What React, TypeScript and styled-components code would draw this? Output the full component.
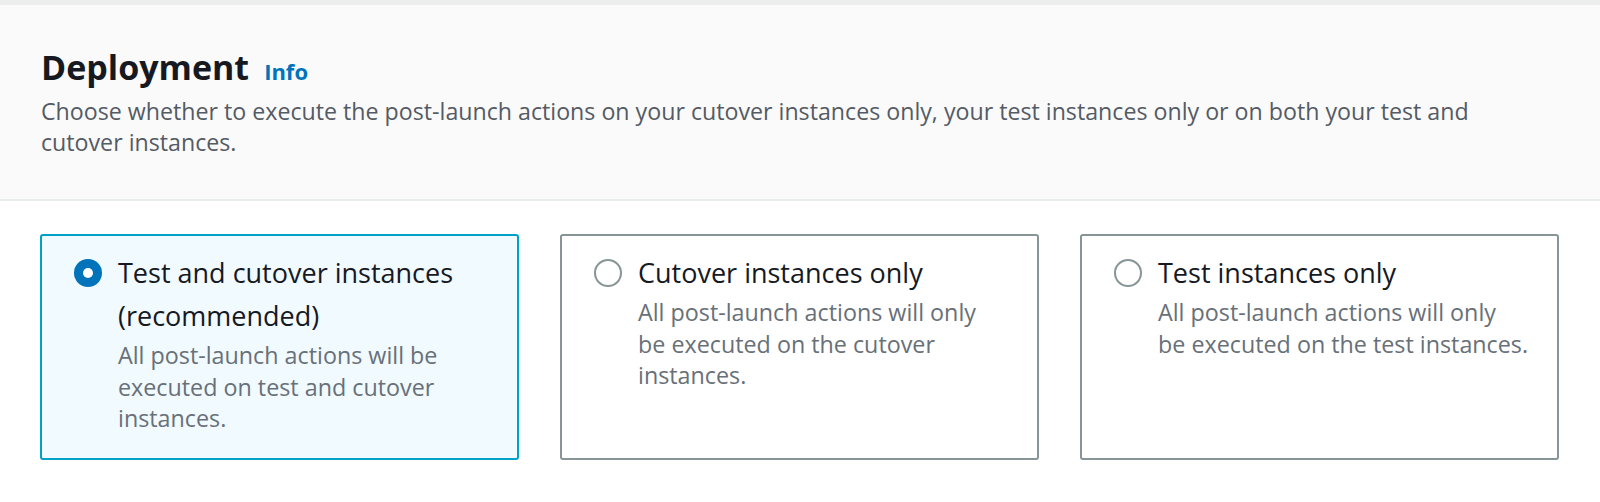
import React, { useState } from 'react';
import styled, { createGlobalStyle } from 'styled-components';

const GlobalStyle = createGlobalStyle`
  html, body {
    margin: 0;
    padding: 0;
    background: #ffffff;
  }
  body {
    font-family: "Open Sans", "Noto Sans", Arial, sans-serif;
    -webkit-font-smoothing: antialiased;
  }
`;

const Panel = styled.section`
  width: 1600px;
  height: 502px;
  box-sizing: border-box;
  border-top: 5px solid #eceeee;
  background: #ffffff;
`;

const Header = styled.header`
  background: #fafafa;
  border-bottom: 2px solid #eaeded;
  padding: 40px 41px 41px 41px;
`;

const TitleRow = styled.div`
  display: flex;
  align-items: baseline;
  gap: 15px;
`;

const Title = styled.h2`
  margin: 0;
  font-size: 34px;
  line-height: 44px;
  font-weight: 700;
  color: #16191f;
`;

const InfoLink = styled.a`
  font-size: 22px;
  font-weight: 700;
  color: #0073bb;
  text-decoration: none;
  cursor: pointer;
`;

const Description = styled.p`
  margin: 7px 0 0 0;
  max-width: 1480px;
  font-size: 23.2px;
  line-height: 31px;
  color: #545b64;
`;

const Tiles = styled.div`
  display: grid;
  grid-template-columns: repeat(3, 1fr);
  gap: 41px;
  padding: 33px 41px 0 40px;
`;

const Tile = styled.label<{ $selected: boolean }>`
  display: flex;
  align-items: flex-start;
  gap: 16px;
  height: 226px;
  box-sizing: border-box;
  padding: 15px 0 20px 32px;
  border: 2px solid ${p => (p.$selected ? '#00a1c9' : '#879596')};
  border-radius: 3px;
  background: ${p => (p.$selected ? '#f1faff' : '#ffffff')};
  cursor: pointer;
`;

const RadioWrap = styled.span`
  flex: none;
  display: flex;
  align-items: center;
  height: 43px;
`;

const HiddenInput = styled.input`
  position: absolute;
  opacity: 0;
  width: 0;
  height: 0;
`;

const TileText = styled.span`
  flex: 0 0 370.75px;
  display: flex;
  flex-direction: column;
`;

const TileLabel = styled.span`
  font-size: 27px;
  line-height: 43px;
  color: #16191f;
`;

const TileDescription = styled.span`
  margin-top: 3px;
  font-size: 23.3px;
  line-height: 31.5px;
  color: #687078;
`;

const RadioIcon: React.FC<{ checked: boolean }> = ({ checked }) => (
  <svg width="28" height="28" viewBox="0 0 28 28">
    {checked ? (
      <>
        <circle cx="14" cy="14" r="14" fill="#0073bb" />
        <circle cx="14" cy="14" r="5" fill="#ffffff" />
      </>
    ) : (
      <circle cx="14" cy="14" r="13" fill="#ffffff" stroke="#879596" strokeWidth="2" />
    )}
  </svg>
);

const options = [
  {
    value: 'both',
    label: 'Test and cutover instances (recommended)',
    description: 'All post-launch actions will be executed on test and cutover instances.',
  },
  {
    value: 'cutover',
    label: 'Cutover instances only',
    description: 'All post-launch actions will only be executed on the cutover instances.',
  },
  {
    value: 'test',
    label: 'Test instances only',
    description: 'All post-launch actions will only be executed on the test instances.',
  },
];

const App: React.FC = () => {
  const [selected, setSelected] = useState('both');

  return (
    <>
      <GlobalStyle />
      <Panel>
        <Header>
          <TitleRow>
            <Title>Deployment</Title>
            <InfoLink>Info</InfoLink>
          </TitleRow>
          <Description>
            Choose whether to execute the post-launch actions on your cutover instances only, your test
            instances only or on both your test and cutover instances.
          </Description>
        </Header>
        <Tiles>
          {options.map(opt => (
            <Tile key={opt.value} $selected={selected === opt.value}>
              <HiddenInput
                type="radio"
                name="deployment"
                value={opt.value}
                checked={selected === opt.value}
                onChange={() => setSelected(opt.value)}
              />
              <RadioWrap>
                <RadioIcon checked={selected === opt.value} />
              </RadioWrap>
              <TileText>
                <TileLabel>{opt.label}</TileLabel>
                <TileDescription>{opt.description}</TileDescription>
              </TileText>
            </Tile>
          ))}
        </Tiles>
      </Panel>
    </>
  );
};

export default App;
